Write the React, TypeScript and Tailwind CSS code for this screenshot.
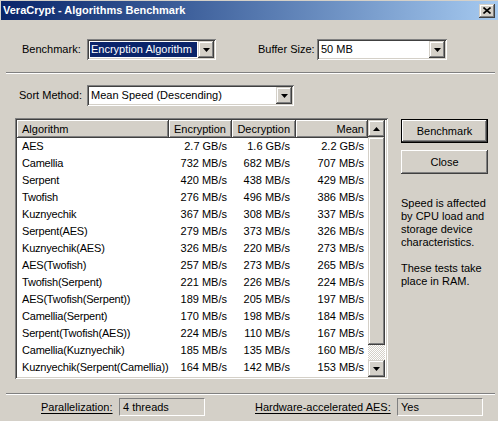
import type { ReactNode } from 'react';

interface BenchRow {
  name: string;
  enc: string;
  dec: string;
  mean: string;
}

const rows: BenchRow[] = [
  { name: 'AES', enc: '2.7 GB/s', dec: '1.6 GB/s', mean: '2.2 GB/s' },
  { name: 'Camellia', enc: '732 MB/s', dec: '682 MB/s', mean: '707 MB/s' },
  { name: 'Serpent', enc: '420 MB/s', dec: '438 MB/s', mean: '429 MB/s' },
  { name: 'Twofish', enc: '276 MB/s', dec: '496 MB/s', mean: '386 MB/s' },
  { name: 'Kuznyechik', enc: '367 MB/s', dec: '308 MB/s', mean: '337 MB/s' },
  { name: 'Serpent(AES)', enc: '279 MB/s', dec: '373 MB/s', mean: '326 MB/s' },
  { name: 'Kuznyechik(AES)', enc: '326 MB/s', dec: '220 MB/s', mean: '273 MB/s' },
  { name: 'AES(Twofish)', enc: '257 MB/s', dec: '273 MB/s', mean: '265 MB/s' },
  { name: 'Twofish(Serpent)', enc: '221 MB/s', dec: '226 MB/s', mean: '224 MB/s' },
  { name: 'AES(Twofish(Serpent))', enc: '189 MB/s', dec: '205 MB/s', mean: '197 MB/s' },
  { name: 'Camellia(Serpent)', enc: '170 MB/s', dec: '198 MB/s', mean: '184 MB/s' },
  { name: 'Serpent(Twofish(AES))', enc: '224 MB/s', dec: '110 MB/s', mean: '167 MB/s' },
  { name: 'Camellia(Kuznyechik)', enc: '185 MB/s', dec: '135 MB/s', mean: '160 MB/s' },
  { name: 'Kuznyechik(Serpent(Camellia))', enc: '164 MB/s', dec: '142 MB/s', mean: '153 MB/s' },
];

// classic win98/2000 bevels
const raised =
  'shadow-[inset_-1px_-1px_#404040,inset_1px_1px_#d4d0c8,inset_-2px_-2px_#808080,inset_2px_2px_#ffffff]';
const raisedBtn =
  'shadow-[inset_-1px_-1px_#404040,inset_1px_1px_#ffffff,inset_-2px_-2px_#808080]';
const sunken =
  'shadow-[inset_1px_1px_#808080,inset_-1px_-1px_#ffffff,inset_2px_2px_#404040,inset_-2px_-2px_#d4d0c8]';

function Arrow({ up = false }: { up?: boolean }) {
  return (
    <svg width="7" height="4" viewBox="0 0 7 4" className={up ? 'rotate-180' : ''}>
      <path d="M0 0h7L3.5 4z" fill="#000" />
    </svg>
  );
}

function Combo({
  className,
  value,
  selected = false,
}: {
  className: string;
  value: string;
  selected?: boolean;
}) {
  return (
    <div className={`flex h-[21px] bg-white p-[2px] ${sunken} ${className}`}>
      <div className="flex min-w-0 flex-1 p-[1px]">
        <div
          className={`flex flex-1 items-center pl-[1px] ${
            selected ? 'bg-[#0a246a] text-white' : ''
          }`}
        >
          {value}
        </div>
      </div>
      <div className={`flex w-[16px] items-center justify-center bg-[#d4d0c8] ${raised}`}>
        <Arrow />
      </div>
    </div>
  );
}

function Button({ children, isDefault = false }: { children: ReactNode; isDefault?: boolean }) {
  return (
    <div
      className={`flex h-[24px] w-[87px] items-center justify-center bg-[#d4d0c8] ${
        isDefault ? 'border border-black' : ''
      } ${raisedBtn}`}
    >
      {children}
    </div>
  );
}

function Etched({ className }: { className: string }) {
  return <div className={`h-[2px] border-t border-t-[#808080] border-b border-b-white ${className}`} />;
}

function Static({ className, value }: { className: string; value: string }) {
  return (
    <div
      className={`flex h-[18px] items-center border border-t-[#808080] border-l-[#808080] border-r-white border-b-white pl-[3px] ${className}`}
    >
      {value}
    </div>
  );
}

function HeaderCell({ className, children }: { className: string; children: ReactNode }) {
  return (
    <div className={`flex h-[18px] items-center bg-[#d4d0c8] ${raisedBtn} ${className}`}>
      {children}
    </div>
  );
}

function ScrollBar() {
  return (
    <div className="flex w-[17px] flex-col bg-[#d4d0c8]">
      <div className={`flex h-[17px] items-center justify-center ${raised}`}>
        <Arrow up />
      </div>
      <div className="flex flex-1 flex-col bg-[image:repeating-conic-gradient(#ffffff_0%_25%,#d4d0c8_0%_50%)] bg-size-[2px_2px]">
        <div className={`h-[208px] bg-[#d4d0c8] ${raised}`} />
      </div>
      <div className={`flex h-[17px] items-center justify-center ${raised}`}>
        <Arrow />
      </div>
    </div>
  );
}

function ResultsList() {
  return (
    <div className={`ml-[15px] flex h-[261px] w-[373px] bg-white p-[2px] ${sunken}`}>
      <div className="flex w-[351px] flex-col">
        <div className="flex">
          <HeaderCell className="w-[152px] pl-[5px]">Algorithm</HeaderCell>
          <HeaderCell className="w-[63px] justify-end pr-[6px]">Encryption</HeaderCell>
          <HeaderCell className="w-[64px] justify-end pr-[6px]">Decryption</HeaderCell>
          <HeaderCell className="w-[72px] justify-end pr-[4px]">Mean</HeaderCell>
        </div>
        {rows.map((r) => (
          <div key={r.name} className="flex h-[17px] items-center">
            <div className="w-[152px] pl-[5px] tracking-[-0.2px] whitespace-nowrap">{r.name}</div>
            <div className="w-[63px] pr-[5px] text-right whitespace-nowrap">{r.enc}</div>
            <div className="w-[64px] pr-[6px] text-right whitespace-nowrap">{r.dec}</div>
            <div className="w-[72px] pr-[4px] text-right whitespace-nowrap">{r.mean}</div>
          </div>
        ))}
      </div>
      <ScrollBar />
    </div>
  );
}

function TitleBar() {
  return (
    <div className="mt-[1px] ml-[1px] flex h-[19px] items-center bg-gradient-to-r from-[#0a246a] to-[#a6caf0] pr-[3px] pl-[2px]">
      <span className="flex-1 font-bold text-white">VeraCrypt - Algorithms Benchmark</span>
      <div className={`flex h-[14px] w-[16px] items-center justify-center bg-[#d4d0c8] ${raised}`}>
        <svg width="8" height="7" viewBox="0 0 8 7">
          <path d="M0.5 0.5l7 6M7.5 0.5l-7 6" stroke="#000" strokeWidth="1.6" />
        </svg>
      </div>
    </div>
  );
}

export default function App() {
  return (
    <div className="flex h-[421px] w-[498px] flex-col overflow-hidden bg-[#d4d0c8] font-['Liberation_Sans',Arial,sans-serif] text-[11px] leading-[13px] text-black">
      <TitleBar />

      <div className="mt-[19px] flex h-[21px] items-center">
        <span className="ml-[22px] w-[65px]">Benchmark:</span>
        <Combo className="w-[129px]" value="Encryption Algorithm" selected />
        <span className="ml-[42px] w-[59px]">Buffer Size:</span>
        <Combo className="w-[130px]" value="50 MB" />
      </div>

      <Etched className="mt-[12px] mr-[3px] ml-[6px]" />

      <div className="mt-[11px] flex h-[21px] items-center">
        <span className="ml-[19px] w-[68px]">Sort Method:</span>
        <Combo className="w-[207px]" value="Mean Speed (Descending)" />
      </div>

      <div className="mt-[12px] flex">
        <ResultsList />
        <div className="ml-[13px] flex flex-col pt-[1px]">
          <Button isDefault>Benchmark</Button>
          <div className="mt-[7px]">
            <Button>Close</Button>
          </div>
          <p className="mt-[23px]">
            Speed is affected
            <br />
            by CPU load and
            <br />
            storage device
            <br />
            characteristics.
          </p>
          <p className="mt-[13px]">
            These tests take
            <br />
            place in RAM.
          </p>
        </div>
      </div>

      <Etched className="mt-[14px] mr-[3px] ml-[6px]" />

      <div className="mt-[3px] flex items-center">
        <span className="ml-[41px] w-[78px] underline underline-offset-2">Parallelization:</span>
        <Static className="w-[86px]" value="4 threads" />
        <span className="ml-[50px] w-[142px] underline underline-offset-2">Hardware-accelerated AES:</span>
        <Static className="w-[86px]" value="Yes" />
      </div>
    </div>
  );
}
